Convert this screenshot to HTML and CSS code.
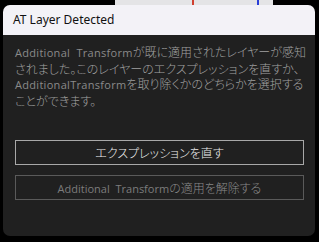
FILE: index.html
```html
<!DOCTYPE html>
<html>
<head>
    <title>AT Layer Detected</title>
    <link rel="stylesheet" href="styles.css">
</head>
<body>
    <div class="backdrop">
        <div class="chart">
            <span class="line-red"></span>
            <span class="line-blue"></span>
        </div>
    </div>

    <div class="dialog">
        <div class="titlebar">AT Layer Detected</div>
        <div class="content">
            <p class="message">
                <span class="latin">Additional&nbsp; Transform</span>が既に適用されたレイヤーが感知<br>
                されました。このレイヤーのエクスプレッションを直すか、<br>
                <span class="latin">AdditionalTransform</span>を取り除くかのどちらかを選択する<br>
                ことができます。
            </p>
            <div class="actions">
                <button class="btn btn-primary">エクスプレッションを直す</button>
                <button class="btn btn-secondary"><span class="latin">Additional&nbsp; Transform</span>の適用を解除する</button>
            </div>
        </div>
    </div>
</body>
</html>
```

FILE: styles.css
```css
body {
    margin: 0;
    background: #000;
    font-family: "Noto Sans", "Noto Sans CJK JP", sans-serif;
    width: 319px;
    height: 242px;
    overflow: hidden;
}
.backdrop {
    height: 5px;
    padding-left: 115px;
}
.chart {
    width: 158px;
    height: 5px;
    background: #e4e4e6;
    display: flex;
}
.line-red {
    width: 2px;
    height: 5px;
    margin-left: 77px;
    background: #d04030;
}
.line-blue {
    width: 2px;
    height: 5px;
    margin-left: 63px;
    background: #2a3fd8;
}
.dialog {
    margin: 0 4px 0 3px;
    height: 231px;
    border-radius: 7px;
    overflow: hidden;
    background: #202020;
    display: flex;
    flex-direction: column;
}
.titlebar {
    height: 30px;
    background: #f3f2f7;
    color: #111;
    font-size: 12px;
    line-height: 30px;
    padding-left: 10px;
}
.content {
    padding: 9px 11px 0 12px;
}
.message {
    margin: 0;
    color: #a0a0a0;
    font-family: "Noto Sans CJK JP", sans-serif;
    font-feature-settings: "palt";
    font-weight: 300;
    font-size: 12px;
    line-height: 15.5px;
    white-space: nowrap;
}
.latin {
    font-family: "Open Sans", "Noto Sans", sans-serif;
    font-weight: 400;
    font-size: 11px;
    letter-spacing: 0.3px;
    color: #8a8a8a;
}
.actions {
    margin-top: 32px;
    display: flex;
    flex-direction: column;
    gap: 10px;
}
.btn {
    height: 25px;
    margin: 0;
    padding: 0;
    background: #202020;
    font-family: "Noto Sans CJK JP", sans-serif;
    font-feature-settings: "palt";
    font-weight: 300;
    font-size: 12px;
    cursor: pointer;
}
.btn-primary {
    border: 1px solid #a8a8a8;
    color: #eeeeee;
}
.btn-secondary {
    border: 1px solid #5a5a5a;
    color: #8a8a8a;
}
.btn-secondary .latin {
    font-size: 11px;
    letter-spacing: 0;
    color: #7c7c7c;
}
```
